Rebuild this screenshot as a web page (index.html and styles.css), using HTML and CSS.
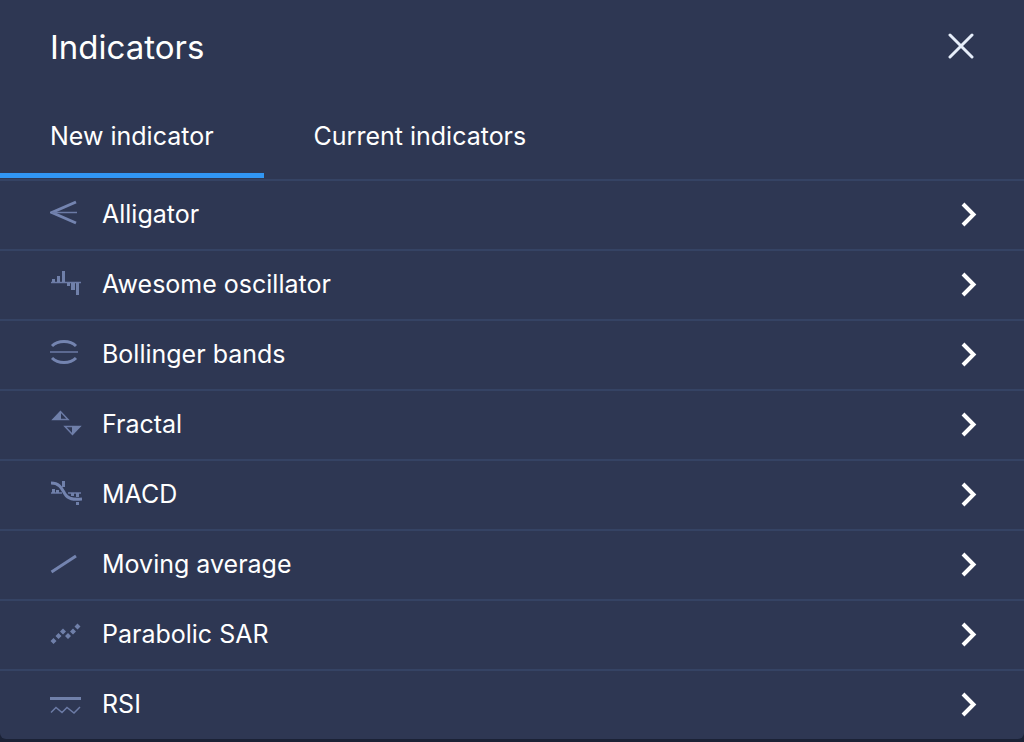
FILE: index.html
```
<!DOCTYPE html>
<html lang="en">
<head>
  <meta charset="UTF-8" />
  <meta name="viewport" content="width=device-width, initial-scale=1.0"/>
  <title>Indicators</title>
  <link rel="stylesheet" href="styles.css">
</head>
<body>
  <main class="panel">

    <!-- HEADER -->
    <header class="header">
      <h1 class="title">Indicators</h1>
      <button class="close" type="button" aria-label="Close">
        <svg width="28" height="28" viewBox="0 0 28 28"><path d="M3 2L25 24M25 2L3 24"/></svg>
      </button>
    </header>

    <!-- TABS -->
    <nav class="tabs">
      <button class="tab active" type="button">New indicator</button>
      <button class="tab" type="button">Current indicators</button>
    </nav>

    <!-- INDICATOR LIST -->
    <ul class="list">
      <li>
        <button class="item" type="button">
          <svg class="icon" viewBox="0 0 32 32"><path class="thick" d="M26 4L2 14.5L26 25"/><path class="thin" d="M2 14.5H27"/></svg>
          <span class="name">Alligator</span>
          <svg class="arrow" viewBox="0 0 20 28"><path d="M3 4L13.5 14.5L3 25"/></svg>
        </button>
      </li>
      <li>
        <button class="item" type="button">
          <svg class="icon" viewBox="0 0 32 32"><path class="thin" d="M1 14.5H31"/><path class="solid" d="M2 11h3v3H2zM7 8h3v6H7zM12 3h3v11h-3zM17 15h3v3h-3zM21 15h4v7h-4zM26 15h3v12h-3z"/></svg>
          <span class="name">Awesome oscillator</span>
          <svg class="arrow" viewBox="0 0 20 28"><path d="M3 4L13.5 14.5L3 25"/></svg>
        </button>
      </li>
      <li>
        <button class="item" type="button">
          <svg class="icon" viewBox="0 0 32 32"><path class="thick" d="M2 8C8 2 20 2 26 8M2 20C8 26 20 26 26 20"/><path class="thin" d="M0 14H28"/></svg>
          <span class="name">Bollinger bands</span>
          <svg class="arrow" viewBox="0 0 20 28"><path d="M3 4L13.5 14.5L3 25"/></svg>
        </button>
      </li>
      <li>
        <button class="item" type="button">
          <svg class="icon" viewBox="0 0 32 32"><path class="thin" d="M10.5 3.5L3 11.5H18ZM22.5 26.5L15 18.5H30Z"/><path class="solid" d="M11 3V12H2zM22 27V18H31z"/></svg>
          <span class="name">Fractal</span>
          <svg class="arrow" viewBox="0 0 20 28"><path d="M3 4L13.5 14.5L3 25"/></svg>
        </button>
      </li>
      <li>
        <button class="item" type="button">
          <svg class="icon" viewBox="0 0 32 32"><path class="thick" d="M1 5C10 5 12 11 15 16C18 21 23 22 32 21"/><path class="thin" d="M1 15H12M18 15H31"/><path class="solid" d="M2 11h3v4H2zM6 12h3v3H6zM12 3h3v6h-3zM21 15h3v3h-3zM26 15h3v4h-3zM26 24h3v3h-3z"/></svg>
          <span class="name">MACD</span>
          <svg class="arrow" viewBox="0 0 20 28"><path d="M3 4L13.5 14.5L3 25"/></svg>
        </button>
      </li>
      <li>
        <button class="item" type="button">
          <svg class="icon" viewBox="0 0 32 32"><path class="thick" d="M1.5 24L26 8"/></svg>
          <span class="name">Moving average</span>
          <svg class="arrow" viewBox="0 0 20 28"><path d="M3 4L13.5 14.5L3 25"/></svg>
        </button>
      </li>
      <li>
        <button class="item" type="button">
          <svg class="icon" viewBox="0 0 32 32"><path class="solid" d="M3.5 20l3 3l-3 3l-3-3zM8.5 15l3 3l-3 3l-3-3zM13 10.5l3 3l-3 3l-3-3zM18 15l3 3l-3 3l-3-3zM23 10.5l3 3l-3 3l-3-3zM27.5 5.5l3 3l-3 3l-3-3z"/></svg>
          <span class="name">Parabolic SAR</span>
          <svg class="arrow" viewBox="0 0 20 28"><path d="M3 4L13.5 14.5L3 25"/></svg>
        </button>
      </li>
      <li>
        <button class="item" type="button">
          <svg class="icon" viewBox="0 0 32 32"><path class="solid" d="M0 9H31V12H0z"/><path class="thin" d="M1 24.5L6 19.5L12 24.5L17 19.5L24 25L30 19"/></svg>
          <span class="name">RSI</span>
          <svg class="arrow" viewBox="0 0 20 28"><path d="M3 4L13.5 14.5L3 25"/></svg>
        </button>
      </li>
    </ul>

  </main>
</body>
</html>
```
FILE: styles.css
```
* {
  box-sizing: border-box;
}

body {
  margin: 0;
  background: #1b2236;
  color: #fff;
  font-family: Inter, "Liberation Sans", sans-serif;
}

button {
  margin: 0;
  border: none;
  background: none;
  color: inherit;
  font: inherit;
  cursor: pointer;
}

svg {
  display: block;
  fill: none;
}

.panel {
  background: #2e3753;
  border-radius: 0 0 6px 6px;
}

.header {
  display: flex;
  justify-content: space-between;
  align-items: center;
  height: 94px;
  padding: 0 49px 0 50px;
}

.title {
  margin: 0;
  font-size: 33px;
  font-weight: 400;
}

.close {
  padding: 0;
  stroke: #e6eefa;
  stroke-width: 3;
  stroke-linecap: round;
}

.tabs {
  display: flex;
  padding-bottom: 1px;
}

.tab {
  height: 84px;
  padding: 5px 50px 0;
  border-bottom: 5px solid transparent;
  font-size: 25px;
}

.tab.active {
  border-bottom-color: #3196f3;
}

.list {
  margin: 0;
  padding: 0;
  list-style: none;
}

.item {
  display: flex;
  align-items: center;
  width: 100%;
  height: 70px;
  padding: 0 44px 2px 50px;
  border-top: 2px solid #354364;
  font-size: 25px;
  text-align: left;
}

.icon {
  width: 32px;
  height: 32px;
  margin-right: 20px;
}

.name {
  flex: 1;
}

.arrow {
  width: 20px;
  height: 28px;
  stroke: #fff;
  stroke-width: 4;
}

.thick {
  stroke: #7484b0;
  stroke-width: 3;
}

.thin {
  stroke: #6c7ba6;
  stroke-width: 1.5;
}

.solid {
  fill: #7080aa;
}
```
